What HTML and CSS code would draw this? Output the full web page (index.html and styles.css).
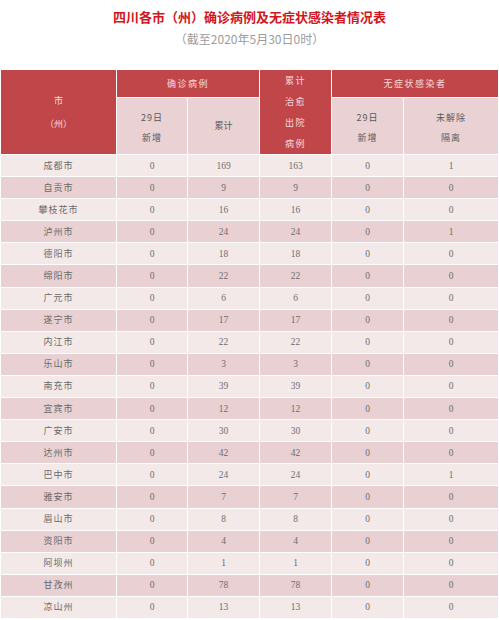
FILE: index.html
```html
<!DOCTYPE html>
<html lang="zh">
<head>
<meta charset="utf-8">
<title>四川各市（州）确诊病例及无症状感染者情况表</title>
<link rel="stylesheet" href="styles.css">
</head>
<body>
<h1 class="title">四川各市（州）确诊病例及无症状感染者情况表</h1>
<p class="subtitle">（截至2020年5月30日0时）</p>
<table class="grid">
  <colgroup>
    <col class="c1"><col class="c2"><col class="c3"><col class="c4"><col class="c5"><col class="c6">
  </colgroup>
  <thead>
    <tr class="h1">
      <th rowspan="2" class="dark city-h">市<br>（州）</th>
      <th colspan="2" class="dark group">确诊病例</th>
      <th rowspan="2" class="dark cured">累计<br>治愈<br>出院<br>病例</th>
      <th colspan="2" class="dark group">无症状感染者</th>
    </tr>
    <tr class="h2">
      <th class="sub two">29日<br>新增</th>
      <th class="sub">累计</th>
      <th class="sub two">29日<br>新增</th>
      <th class="sub two">未解除<br>隔离</th>
    </tr>
  </thead>
  <tbody>
    <tr><td class="name">成都市</td><td>0</td><td>169</td><td>163</td><td>0</td><td>1</td></tr>
    <tr><td class="name">自贡市</td><td>0</td><td>9</td><td>9</td><td>0</td><td>0</td></tr>
    <tr><td class="name">攀枝花市</td><td>0</td><td>16</td><td>16</td><td>0</td><td>0</td></tr>
    <tr><td class="name">泸州市</td><td>0</td><td>24</td><td>24</td><td>0</td><td>1</td></tr>
    <tr><td class="name">德阳市</td><td>0</td><td>18</td><td>18</td><td>0</td><td>0</td></tr>
    <tr><td class="name">绵阳市</td><td>0</td><td>22</td><td>22</td><td>0</td><td>0</td></tr>
    <tr><td class="name">广元市</td><td>0</td><td>6</td><td>6</td><td>0</td><td>0</td></tr>
    <tr><td class="name">遂宁市</td><td>0</td><td>17</td><td>17</td><td>0</td><td>0</td></tr>
    <tr><td class="name">内江市</td><td>0</td><td>22</td><td>22</td><td>0</td><td>0</td></tr>
    <tr><td class="name">乐山市</td><td>0</td><td>3</td><td>3</td><td>0</td><td>0</td></tr>
    <tr><td class="name">南充市</td><td>0</td><td>39</td><td>39</td><td>0</td><td>0</td></tr>
    <tr><td class="name">宜宾市</td><td>0</td><td>12</td><td>12</td><td>0</td><td>0</td></tr>
    <tr><td class="name">广安市</td><td>0</td><td>30</td><td>30</td><td>0</td><td>0</td></tr>
    <tr><td class="name">达州市</td><td>0</td><td>42</td><td>42</td><td>0</td><td>0</td></tr>
    <tr><td class="name">巴中市</td><td>0</td><td>24</td><td>24</td><td>0</td><td>1</td></tr>
    <tr><td class="name">雅安市</td><td>0</td><td>7</td><td>7</td><td>0</td><td>0</td></tr>
    <tr><td class="name">眉山市</td><td>0</td><td>8</td><td>8</td><td>0</td><td>0</td></tr>
    <tr><td class="name">资阳市</td><td>0</td><td>4</td><td>4</td><td>0</td><td>0</td></tr>
    <tr><td class="name">阿坝州</td><td>0</td><td>1</td><td>1</td><td>0</td><td>0</td></tr>
    <tr><td class="name">甘孜州</td><td>0</td><td>78</td><td>78</td><td>0</td><td>0</td></tr>
    <tr><td class="name">凉山州</td><td>0</td><td>13</td><td>13</td><td>0</td><td>0</td></tr>
  </tbody>
</table>
</body>
</html>
```

FILE: styles.css
```css
html, body {
  margin: 0;
  padding: 0;
  background: #ffffff;
}
body {
  width: 499px;
  font-family: "Liberation Serif", "Noto Sans CJK SC", serif;
}
.title {
  margin: 0;
  padding-top: 8px;
  text-align: center;
  font-family: "Noto Sans CJK SC", sans-serif;
  font-weight: 700;
  font-size: 13px;
  line-height: 17px;
  color: #d0171d;
}
.subtitle {
  margin: 6px 0 0;
  text-align: center;
  font-family: "Noto Sans CJK SC", sans-serif;
  font-size: 12px;
  line-height: 15px;
  color: #9c9c9c;
}
.grid {
  margin-top: 23px;
  width: 498px;
  table-layout: fixed;
  border-collapse: collapse;
}
.c1 { width: 116px; }
.c2 { width: 71px; }
.c3 { width: 72px; }
.c4 { width: 72px; }
.c5 { width: 72px; }
.c6 { width: 95px; }
.grid th,
.grid td {
  border: 1px solid #ffffff;
  padding: 0;
  text-align: center;
  vertical-align: middle;
}
.grid th {
  font-family: "Noto Sans CJK SC", sans-serif;
  font-weight: 400;
  font-size: 9px;
}
.dark {
  background: #c1464a;
  color: #f6dcdc;
}
.h1 { height: 27px; }
.h2 { height: 56px; }
.group {
  letter-spacing: 1.5px;
}
.city-h {
  line-height: 23px;
}
.cured {
  line-height: 21px;
  letter-spacing: 1.5px;
}
.sub {
  background: #e9d1d4;
  color: #5a5a5a;
  line-height: 20px;
}
.sub.two {
  padding-top: 4px;
  letter-spacing: 1px;
}
.grid tbody tr {
  height: 22.1px;
}
.grid tbody tr:nth-child(odd) td {
  background: #f3e9e9;
}
.grid tbody tr:nth-child(even) td {
  background: #e8d0d3;
}
.grid td {
  font-size: 9.5px;
  line-height: 12px;
  color: #6e6e6e;
}
.grid td.name {
  font-family: "Noto Sans CJK SC", sans-serif;
  font-size: 9px;
  letter-spacing: 1px;
  color: #6a6a6a;
}
```
